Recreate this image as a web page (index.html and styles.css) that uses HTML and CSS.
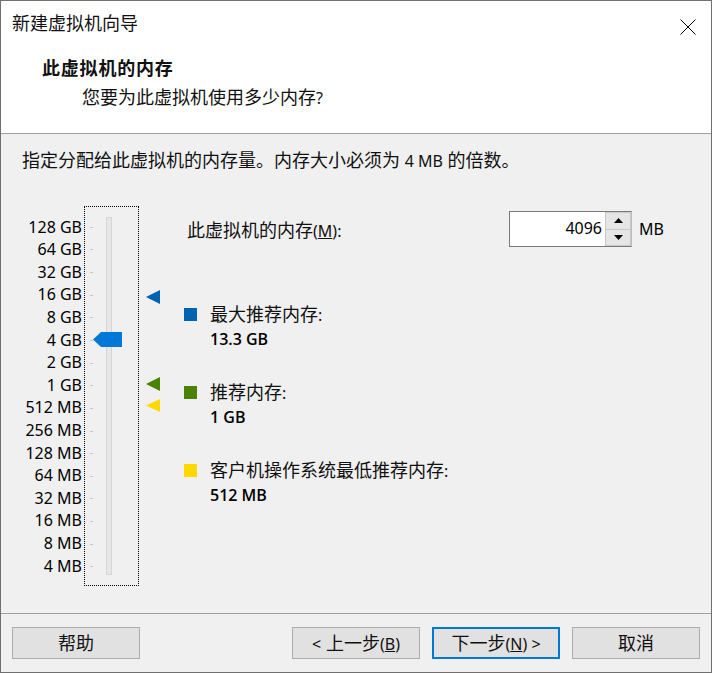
FILE: index.html
```html
<!DOCTYPE html>
<html lang="zh-CN">
<head>
<meta charset="utf-8">
<title>新建虚拟机向导</title>
<link rel="stylesheet" href="styles.css">
</head>
<body>
<div class="window">
  <div class="header">
    <div class="titlebar">
      <span class="title">新建虚拟机向导</span>
      <svg class="close" width="16" height="16" viewBox="0 0 16 16"><path d="M0.5 0.5 L15.5 15.5 M15.5 0.5 L0.5 15.5" stroke="#000" stroke-width="1" fill="none"/></svg>
    </div>
    <div class="heading">此虚拟机的内存</div>
    <div class="subheading">您要为此虚拟机使用多少内存<span class="lat">?</span></div>
  </div>
  <div class="content">
    <div class="desc">指定分配给此虚拟机的内存量。内存大小必须为 <span class="lat">4 MB</span> 的倍数。</div>
    <div class="main">
      <div class="scale">
        <div class="scale-label">128 GB</div>
        <div class="scale-label">64 GB</div>
        <div class="scale-label">32 GB</div>
        <div class="scale-label">16 GB</div>
        <div class="scale-label">8 GB</div>
        <div class="scale-label">4 GB</div>
        <div class="scale-label">2 GB</div>
        <div class="scale-label">1 GB</div>
        <div class="scale-label">512 MB</div>
        <div class="scale-label">256 MB</div>
        <div class="scale-label">128 MB</div>
        <div class="scale-label">64 MB</div>
        <div class="scale-label">32 MB</div>
        <div class="scale-label">16 MB</div>
        <div class="scale-label">8 MB</div>
        <div class="scale-label">4 MB</div>
      </div>
      <div class="slider">
        <svg width="53" height="378" viewBox="0 0 53 378">
          <g fill="#c4c4c4">
            <rect x="5" y="20" width="3" height="1"/>
            <rect x="5" y="42" width="3" height="1"/>
            <rect x="5" y="65" width="3" height="1"/>
            <rect x="5" y="88" width="3" height="1"/>
            <rect x="5" y="110" width="3" height="1"/>
            <rect x="5" y="133" width="3" height="1"/>
            <rect x="5" y="156" width="3" height="1"/>
            <rect x="5" y="178" width="3" height="1"/>
            <rect x="5" y="201" width="3" height="1"/>
            <rect x="5" y="224" width="3" height="1"/>
            <rect x="5" y="246" width="3" height="1"/>
            <rect x="5" y="269" width="3" height="1"/>
            <rect x="5" y="291" width="3" height="1"/>
            <rect x="5" y="314" width="3" height="1"/>
            <rect x="5" y="337" width="3" height="1"/>
            <rect x="5" y="359" width="3" height="1"/>
          </g>
          <rect x="21.5" y="10.5" width="5" height="357" fill="#e7e7e7" stroke="#d6d6d6"/>
          <polygon points="8,132.5 16,125 37,125 37,140 16,140" fill="#0078d7"/>
        </svg>
      </div>
      <div class="markers">
        <svg width="22" height="380" viewBox="0 0 22 380">
          <polygon points="21,84 7,91 21,98" fill="#0063b1"/>
          <polygon points="21,171 7,178 21,185" fill="#498205"/>
          <polygon points="21,193 7,199.5 21,206" fill="#ffd800"/>
        </svg>
      </div>
      <div class="panel">
        <div class="mem-row">
          <label class="mem-label">此虚拟机的内存<span class="lat">(<u>M</u>):</span></label>
          <div class="spin">
            <div class="spin-input">4096</div>
            <div class="spin-buttons">
              <div class="spin-btn"><svg width="9" height="5" viewBox="0 0 9 5"><polygon points="0,5 4.5,0 9,5" fill="#000"/></svg></div>
              <div class="spin-btn"><svg width="9" height="5" viewBox="0 0 9 5"><polygon points="0,0 9,0 4.5,5" fill="#000"/></svg></div>
            </div>
          </div>
          <span class="unit">MB</span>
        </div>
        <div class="legend">
          <div class="item">
            <div class="item-head"><span class="swatch swatch-blue"></span><span>最大推荐内存<span class="lat">:</span></span></div>
            <div class="item-value">13.3 GB</div>
          </div>
          <div class="item">
            <div class="item-head"><span class="swatch swatch-green"></span><span>推荐内存<span class="lat">:</span></span></div>
            <div class="item-value">1 GB</div>
          </div>
          <div class="item">
            <div class="item-head"><span class="swatch swatch-yellow"></span><span>客户机操作系统最低推荐内存<span class="lat">:</span></span></div>
            <div class="item-value">512 MB</div>
          </div>
        </div>
      </div>
    </div>
  </div>
  <div class="footer">
    <button class="btn">帮助</button>
    <div class="btn-group">
      <button class="btn"><span class="lat">&lt;</span> 上一步<span class="lat">(<u>B</u>)</span></button>
      <button class="btn btn-default">下一步<span class="lat">(<u>N</u>) &gt;</span></button>
      <button class="btn">取消</button>
    </div>
  </div>
</div>
</body>
</html>
```

FILE: styles.css
```css
* { box-sizing: border-box; }
html, body { margin: 0; padding: 0; }
body {
  width: 712px;
  height: 673px;
  overflow: hidden;
  font-family: "Noto Sans", "Noto Sans CJK SC", sans-serif;
  font-size: 18px;
  color: #111;
  background: #f0f0f0;
}
.lat { font-family: "Noto Sans", sans-serif; font-size: 16px; }
.window {
  width: 712px;
  height: 673px;
  border: 1px solid #6f6f6f;
  display: flex;
  flex-direction: column;
  background: #f0f0f0;
}
.header {
  height: 133px;
  background: #fff;
  border-bottom: 1px solid #a0a0a0;
  padding-top: 10px;
  flex: none;
}
.titlebar {
  height: 24px;
  line-height: 24px;
  display: flex;
  align-items: center;
  padding-left: 11px;
  padding-right: 15px;
  justify-content: space-between;
}
.close { display: block; margin-top: 7px; }
.heading {
  margin-top: 21px;
  padding-left: 41px;
  line-height: 24px;
  font-weight: bold;
  letter-spacing: 0.8px;
}
.subheading {
  margin-top: 5px;
  padding-left: 81px;
  line-height: 24px;
}
.content {
  flex: 1;
  padding-top: 14px;
}
.desc {
  padding-left: 21px;
  line-height: 24px;
}
.main {
  margin-top: 33px;
  display: flex;
  align-items: flex-start;
}
.scale {
  width: 81px;
  padding-top: 9.7px;
  font-size: 16px;
  color: #000;
}
.scale-label {
  height: 22.6px;
  line-height: 22.6px;
  text-align: right;
  white-space: nowrap;
}
.slider {
  margin-left: 2px;
  width: 55px;
  height: 380px;
  border: 1px dotted #000;
}
.slider svg, .markers svg { display: block; }
.markers { width: 22px; height: 380px; }
.panel {
  margin-left: 23px;
  flex: 1;
}
.mem-row {
  margin-top: 5px;
  height: 36px;
  display: flex;
  align-items: center;
}
.mem-label {
  flex: 0 0 325px;
  padding-left: 3px;
}
.spin {
  display: flex;
  height: 36px;
  width: 123px;
  background: #fff;
  border: 1px solid #7a7a7a;
  border-right-color: #bcbcbc;
}
.spin-input {
  flex: 1;
  text-align: right;
  padding-right: 3px;
  font-size: 16px;
  line-height: 32px;
  color: #000;
}
.spin-buttons {
  width: 26px;
  display: flex;
  flex-direction: column;
  padding: 0;
}
.spin-btn {
  flex: 1;
  background: #e5e5e5;
  border: 1px solid #c8c8c8;
  display: flex;
  align-items: center;
  justify-content: center;
}
.spin-btn + .spin-btn { border-top: none; }
.spin-btn svg { display: block; }
.unit {
  margin-left: 7px;
  font-size: 16px;
  color: #000;
}
.legend {
  margin-top: 55px;
  display: flex;
  flex-direction: column;
  gap: 29px;
}
.item-head {
  display: flex;
  align-items: center;
  line-height: 24px;
}
.swatch {
  width: 13px;
  height: 13px;
  margin-right: 13px;
  flex: none;
}
.swatch-blue { background: #0063b1; }
.swatch-green { background: #498205; }
.swatch-yellow { background: #ffd800; }
.item-value {
  padding-left: 26px;
  line-height: 24px;
  font-family: "Open Sans", "Noto Sans", sans-serif;
  font-size: 16px;
  font-weight: 600;
  color: #000;
}
.footer {
  height: 59px;
  flex: none;
  border-top: 1px solid #a0a0a0;
  padding: 13px 11px 0 11px;
  display: flex;
  justify-content: space-between;
  align-items: flex-start;
}
.btn-group { display: flex; gap: 12px; }
.btn {
  width: 128px;
  height: 32px;
  background: #e1e1e1;
  border: 1px solid #adadad;
  font-family: "Noto Sans", "Noto Sans CJK SC", sans-serif;
  font-size: 18px;
  color: #111;
  padding: 0;
  line-height: 28px;
  text-align: center;
}
.btn-default { border: 2px solid #0078d7; }
```
